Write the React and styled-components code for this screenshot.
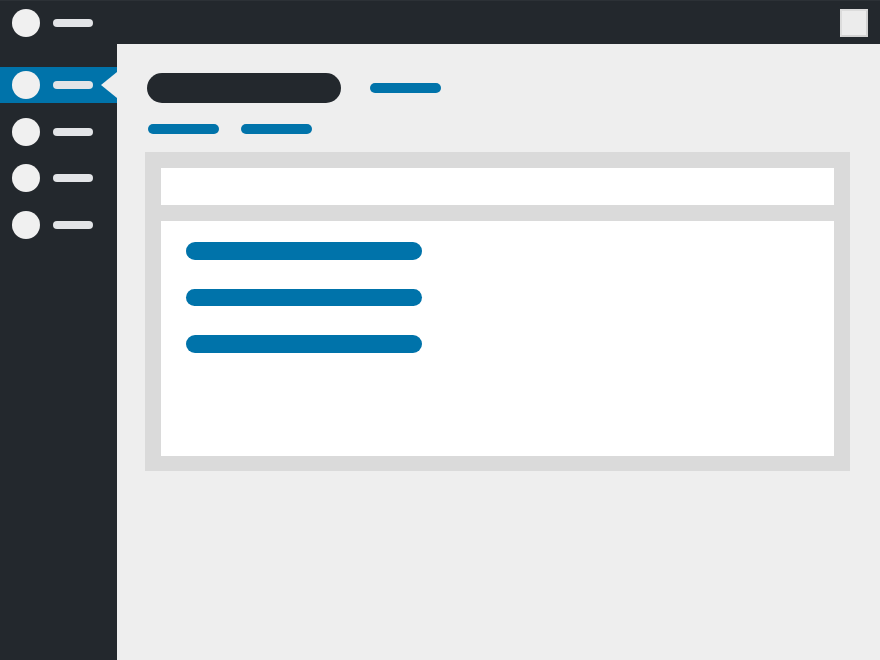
import React from 'react';
import styled, { createGlobalStyle } from 'styled-components';

const GlobalStyle = createGlobalStyle`
  html, body {
    margin: 0;
    padding: 0;
    height: 100%;
    font-family: "Liberation Sans", Arial, sans-serif;
  }
  #root {
    height: 100%;
  }
`;

const DARK = '#23282d';
const BLUE = '#0073aa';
const BG = '#eeeeee';

const Page = styled.div`
  display: flex;
  flex-direction: column;
  width: 100%;
  height: 100vh;
  background: ${BG};
`;

const TopBar = styled.header`
  height: 44px;
  flex-shrink: 0;
  background: ${DARK};
  border-top: 1px solid #2c3136;
  box-sizing: border-box;
  display: flex;
  align-items: center;
  padding: 0 12px;
`;

const Circle = styled.span`
  width: 28px;
  height: 28px;
  border-radius: 50%;
  background: #f0f0f0;
  flex-shrink: 0;
`;

const Bar = styled.span`
  width: 40px;
  height: 8px;
  border-radius: 4px;
  background: #e2e4e7;
  margin-left: 13px;
`;

const Square = styled.span`
  margin-left: auto;
  width: 28px;
  height: 28px;
  box-sizing: border-box;
  background: #ececec;
  border: 2px solid #dcdcdc;
  border-bottom-color: #d2d2d2;
  border-right-color: #d2d2d2;
`;

const Body = styled.div`
  flex: 1;
  display: flex;
`;

const Sidebar = styled.nav`
  width: 117px;
  flex-shrink: 0;
  background: ${DARK};
  padding-top: 23px;
  display: flex;
  flex-direction: column;
  gap: 10.5px;
`;

const MenuItem = styled.div`
  position: relative;
  height: 36px;
  display: flex;
  align-items: center;
  padding-left: 12px;
  background: ${(p) => (p.$active ? BLUE : 'transparent')};

  ${(p) =>
    p.$active &&
    `
    &::after {
      content: '';
      position: absolute;
      right: 0;
      top: 50%;
      margin-top: -13px;
      border-style: solid;
      border-width: 13px 16px 13px 0;
      border-color: transparent ${BG} transparent transparent;
    }
  `}
`;

const Main = styled.main`
  flex: 1;
  padding: 29px 30px 0 28px;
  display: flex;
  flex-direction: column;
`;

const TitleRow = styled.div`
  display: flex;
  align-items: center;
  gap: 29px;
  padding-left: 2px;
`;

const Title = styled.div`
  width: 194px;
  height: 30px;
  border-radius: 15px;
  background: ${DARK};
`;

const Link = styled.span`
  width: 71px;
  height: 10px;
  border-radius: 5px;
  background: ${BLUE};
`;

const SubLinks = styled.div`
  display: flex;
  gap: 22px;
  margin-top: 21px;
  padding-left: 3px;
`;

const Panel = styled.section`
  margin-top: 18px;
  background: #dadada;
  padding: 16px 16px 15px;
  display: flex;
  flex-direction: column;
  gap: 16px;
`;

const PanelHeader = styled.div`
  height: 37px;
  background: #ffffff;
`;

const PanelBody = styled.div`
  height: 235px;
  box-sizing: border-box;
  background: #ffffff;
  padding: 21px 0 0 25px;
  display: flex;
  flex-direction: column;
  gap: 29px;
`;

const Row = styled.span`
  width: 236px;
  height: 17.5px;
  border-radius: 9px;
  background: ${BLUE};
`;

const menu = [true, false, false, false];

export default function App() {
  return (
    <>
      <GlobalStyle />
      <Page>
        <TopBar>
          <Circle />
          <Bar />
          <Square />
        </TopBar>
        <Body>
          <Sidebar>
            {menu.map((active, i) => (
              <MenuItem key={i} $active={active}>
                <Circle />
                <Bar />
              </MenuItem>
            ))}
          </Sidebar>
          <Main>
            <TitleRow>
              <Title />
              <Link />
            </TitleRow>
            <SubLinks>
              <Link />
              <Link />
            </SubLinks>
            <Panel>
              <PanelHeader />
              <PanelBody>
                <Row />
                <Row />
                <Row />
              </PanelBody>
            </Panel>
          </Main>
        </Body>
      </Page>
    </>
  );
}
